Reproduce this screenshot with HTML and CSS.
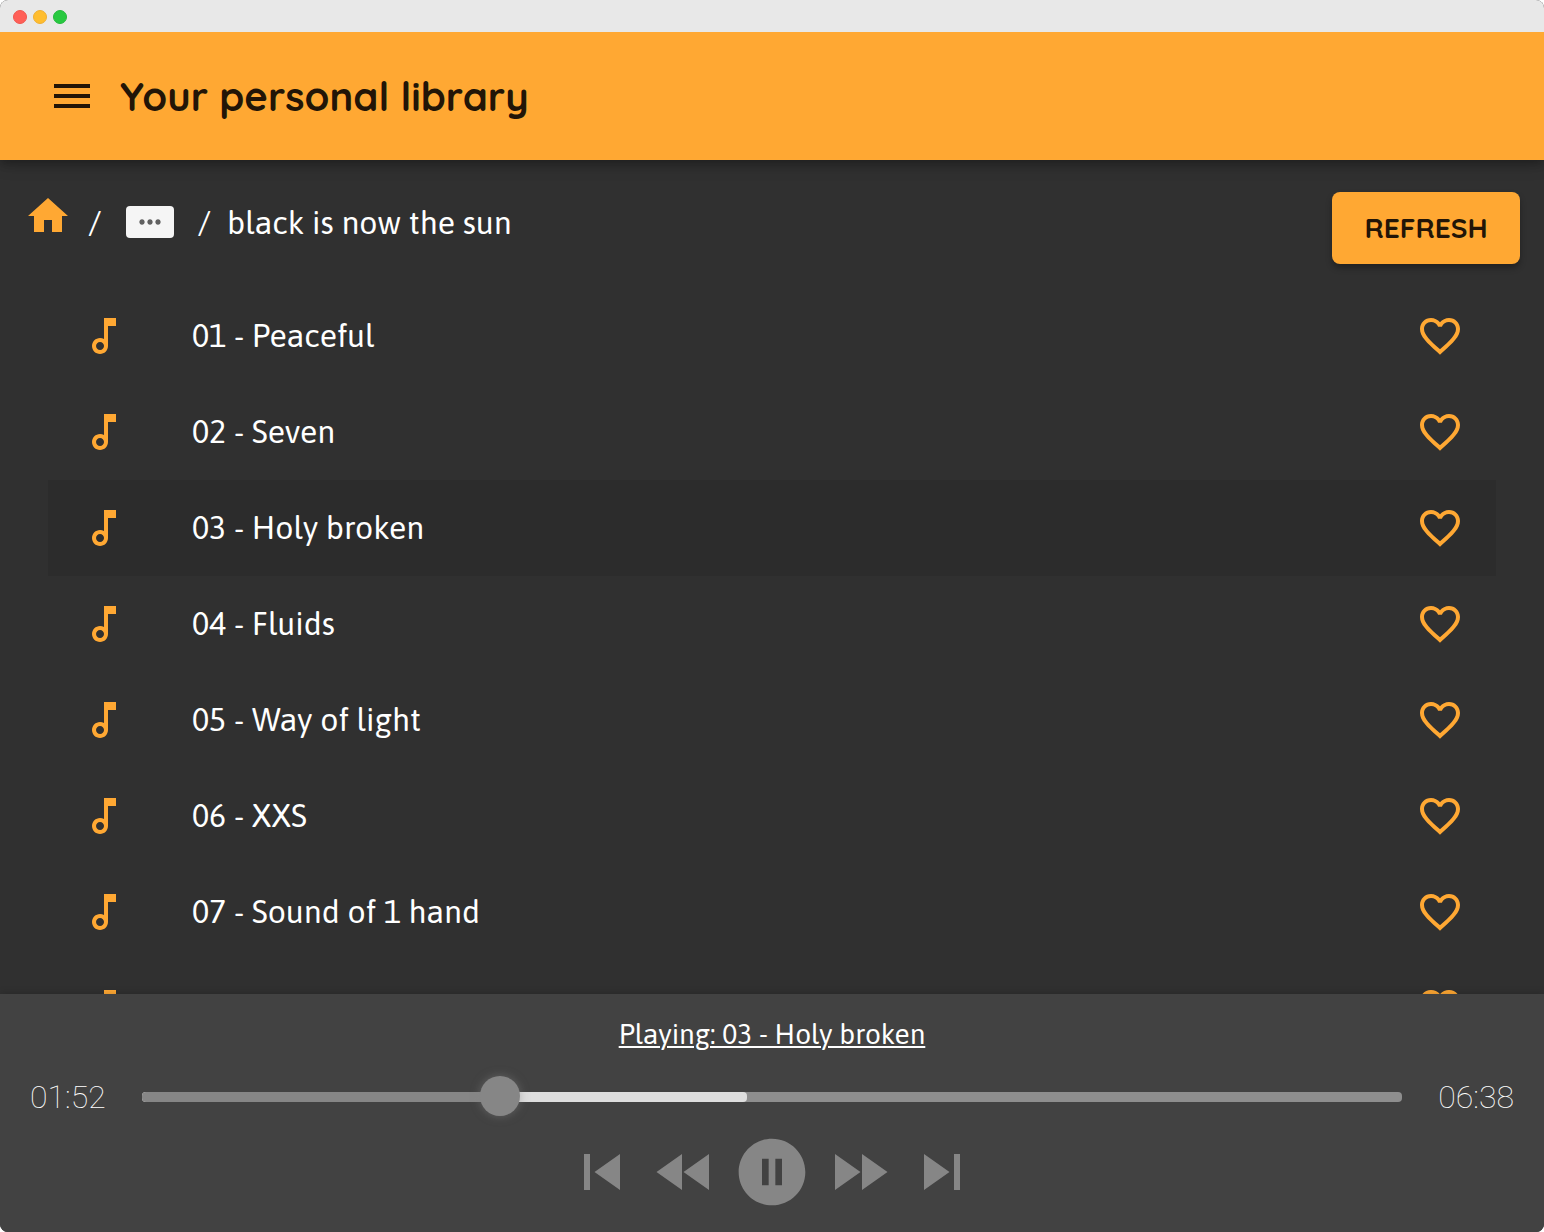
FILE: index.html
```html
<!DOCTYPE html>
<html lang="en">
<head>
<meta charset="utf-8">
<meta name="viewport" content="width=device-width, initial-scale=1">
<title>Your personal library</title>
<link rel="stylesheet" href="styles.css">
</head>
<body>
<svg class="sprite" aria-hidden="true">
  <symbol id="note" viewBox="0 0 24 24"><path d="M12 3l.01 10.55c-.59-.34-1.27-.55-2-.55C7.79 13 6 14.79 6 17s1.79 4 4.01 4S14 19.21 14 17V7h4V3h-6zm-1.99 16c-1.1 0-2-.9-2-2s.9-2 2-2 2 .9 2 2-.9 2-2 2z"/></symbol>
  <symbol id="heart" viewBox="0 0 24 24"><path d="M16.5 3c-1.74 0-3.41.81-4.5 2.09C10.91 3.81 9.24 3 7.5 3 4.42 3 2 5.42 2 8.5c0 3.78 3.4 6.86 8.55 11.54L12 21.35l1.45-1.32C18.6 15.36 22 12.28 22 8.5 22 5.42 19.58 3 16.5 3zm-4.4 15.55l-.1.1-.1-.1C7.14 14.24 4 11.39 4 8.5 4 6.5 5.5 5 7.5 5c1.54 0 3.04.99 3.57 2.36h1.87C13.46 5.99 14.96 5 16.5 5c2 0 3.5 1.5 3.5 3.5 0 2.89-3.14 5.74-7.9 10.05z"/></symbol>
</svg>
<div class="window">
  <div class="titlebar">
    <span class="dot dot-close"></span>
    <span class="dot dot-minimize"></span>
    <span class="dot dot-zoom"></span>
  </div>

  <header class="appbar">
    <button class="icon-button" type="button" aria-label="Menu">
      <svg class="icon" viewBox="0 0 24 24"><path d="M3 18h18v-2H3v2zm0-5h18v-2H3v2zm0-7v2h18V6H3z"/></svg>
    </button>
    <h1 class="appbar-title">Your personal library</h1>
  </header>

  <main class="library">
    <div class="toolbar">
      <nav class="breadcrumbs" aria-label="Breadcrumb">
        <a class="home" href="#" aria-label="Home">
          <svg class="icon" viewBox="0 0 24 24"><path d="M10 20v-6h4v6h5v-8h3L12 3 2 12h3v8z"/></svg>
        </a>
        <span class="separator">/</span>
        <button class="more" type="button" aria-label="Show path">
          <svg class="more-icon" viewBox="0 0 24 24"><path d="M6 10c-1.100 0-2 .9-2 2s.9 2 2 2 2-.9 2-2-.9-2-2-2zm12 0c-1.100 0-2 .9-2 2s.9 2 2 2 2-.9 2-2-.9-2-2-2zm-6 0c-1.100 0-2 .9-2 2s.9 2 2 2 2-.9 2-2-.9-2-2-2z"/></svg>
        </button>
        <span class="separator">/</span>
        <span class="current">black is now the sun</span>
      </nav>
      <button class="refresh" type="button">REFRESH</button>
    </div>

    <ul class="tracks">
      <li class="track"><svg class="icon"><use href="#note"/></svg><span class="track-name">01 - Peaceful</span><button class="icon-button" type="button" aria-label="Favorite"><svg class="icon"><use href="#heart"/></svg></button></li>
      <li class="track"><svg class="icon"><use href="#note"/></svg><span class="track-name">02 - Seven</span><button class="icon-button" type="button" aria-label="Favorite"><svg class="icon"><use href="#heart"/></svg></button></li>
      <li class="track track-active"><svg class="icon"><use href="#note"/></svg><span class="track-name">03 - Holy broken</span><button class="icon-button" type="button" aria-label="Favorite"><svg class="icon"><use href="#heart"/></svg></button></li>
      <li class="track"><svg class="icon"><use href="#note"/></svg><span class="track-name">04 - Fluids</span><button class="icon-button" type="button" aria-label="Favorite"><svg class="icon"><use href="#heart"/></svg></button></li>
      <li class="track"><svg class="icon"><use href="#note"/></svg><span class="track-name">05 - Way of light</span><button class="icon-button" type="button" aria-label="Favorite"><svg class="icon"><use href="#heart"/></svg></button></li>
      <li class="track"><svg class="icon"><use href="#note"/></svg><span class="track-name">06 - XXS</span><button class="icon-button" type="button" aria-label="Favorite"><svg class="icon"><use href="#heart"/></svg></button></li>
      <li class="track"><svg class="icon"><use href="#note"/></svg><span class="track-name">07 - Sound of 1 hand</span><button class="icon-button" type="button" aria-label="Favorite"><svg class="icon"><use href="#heart"/></svg></button></li>
      <li class="track"><svg class="icon"><use href="#note"/></svg><span class="track-name"></span><button class="icon-button" type="button" aria-label="Favorite"><svg class="icon"><use href="#heart"/></svg></button></li>
    </ul>
  </main>

  <footer class="player">
    <a class="playing" href="#">Playing: 03 - Holy broken</a>
    <div class="timeline">
      <span class="time">01:52</span>
      <div class="seek">
        <span class="seek-buffered" style="width: 48%"></span>
        <span class="seek-played" style="width: 28.400%"></span>
        <input class="seek-input" type="range" min="0" max="398" value="113" aria-label="Position">
      </div>
      <span class="time">06:38</span>
    </div>
    <div class="controls">
      <button class="icon-button" type="button" aria-label="Previous"><svg class="control-icon" viewBox="0 0 24 24"><path d="M6 6h2v12H6zm3.500 6l8.500 6V6z"/></svg></button>
      <button class="icon-button" type="button" aria-label="Rewind"><svg class="control-icon" viewBox="0 0 24 24"><path d="M11 18V6l-8.500 6 8.500 6zm.500-6l8.500 6V6l-8.500 6z"/></svg></button>
      <button class="icon-button" type="button" aria-label="Pause"><svg class="pause-icon" viewBox="0 0 24 24"><path d="M12 2C6.480 2 2 6.480 2 12s4.480 10 10 10 10-4.480 10-10S17.520 2 12 2zm-1 14H9V8h2v8zm4 0h-2V8h2v8z"/></svg></button>
      <button class="icon-button" type="button" aria-label="Fast forward"><svg class="control-icon" viewBox="0 0 24 24"><path d="M4 18l8.500-6L4 6v12zm9-12v12l8.500-6L13 6z"/></svg></button>
      <button class="icon-button" type="button" aria-label="Next"><svg class="control-icon" viewBox="0 0 24 24"><path d="M6 18l8.500-6L6 6v12zM16 6v12h2V6h-2z"/></svg></button>
    </div>
  </footer>
</div>
</body>
</html>
```
FILE: styles.css
```css
* {
  box-sizing: border-box;
}

body {
  margin: 0;
  background: #fff;
  color: #fff;
  font-family: Asap, Lato, "Open Sans", sans-serif;
  font-size: 32px;
  line-height: 48px;
}

button {
  border: 0;
  padding: 0;
  color: inherit;
  font: inherit;
  cursor: pointer;
}

svg {
  display: block;
  fill: currentColor;
}

.sprite {
  display: none;
}

.window {
  display: flex;
  flex-direction: column;
  height: 100vh;
  overflow: hidden;
  border-radius: 8px;
  background: #303030;
}

.titlebar {
  display: flex;
  align-items: center;
  gap: 6px;
  flex: none;
  z-index: 2;
  height: 32px;
  padding: 2px 13px 0;
  background: #e8e8e8;
}

.dot {
  width: 14px;
  height: 14px;
  border: 1px solid;
  border-radius: 50%;
}

.dot-close {
  background: #ff5f57;
  border-color: #f0564e;
}

.dot-minimize {
  background: #ffbd2e;
  border-color: #efaf31;
}

.dot-zoom {
  background: #28c940;
  border-color: #24b93b;
}

.appbar {
  display: flex;
  align-items: center;
  gap: 24px;
  flex: none;
  z-index: 1;
  height: 128px;
  padding: 0 48px;
  background: #ffa833;
  color: #221507;
  box-shadow: 0 4px 8px rgba(0, 0, 0, 0.2), 0 4px 16px rgba(0, 0, 0, 0.2);
}

.appbar-title {
  margin: 0;
  font-family: Quicksand, Inter, sans-serif;
  font-size: 40px;
  font-weight: 700;
}

.icon-button {
  flex: none;
  background: none;
}

.icon {
  flex: none;
  width: 48px;
  height: 48px;
}

.library {
  flex: 1;
  min-height: 0;
  overflow: hidden;
}

.toolbar {
  display: flex;
  align-items: flex-start;
  justify-content: space-between;
  padding: 32px 24px 24px;
}

.breadcrumbs {
  display: flex;
  gap: 16px;
}

.home {
  color: #ffa833;
}

.separator,
.current {
  padding-top: 7px;
}

.more {
  display: grid;
  place-items: center;
  width: 48px;
  height: 32px;
  margin: 14px 8px 0;
  border-radius: 4px;
  background: #f5f5f5;
  color: #616161;
}

.more-icon {
  width: 32px;
  height: 32px;
}

.refresh {
  min-width: 188px;
  height: 72px;
  padding: 0 32px;
  border-radius: 8px;
  background: #ffa833;
  color: #221507;
  font-family: Quicksand, Lato, sans-serif;
  font-size: 28px;
  font-weight: 700;
  box-shadow: 0 4px 6px rgba(0, 0, 0, 0.3);
}

.tracks {
  margin: 0;
  padding: 0 48px;
  list-style: none;
}

.track {
  display: flex;
  align-items: center;
  gap: 64px;
  height: 96px;
  padding: 0 32px;
}

.track .icon {
  color: #ffa833;
}

.track-active {
  background: #2c2c2c;
}

.track-name {
  flex: 1;
}

.player {
  display: flex;
  flex-direction: column;
  align-items: center;
  flex: none;
  z-index: 1;
  padding: 20px 30px;
  background: #424242;
  box-shadow: 0 0 8px rgba(0, 0, 0, 0.2);
}

.playing {
  color: #fff;
  font-size: 28px;
  line-height: 40px;
  margin-bottom: 24px;
  text-underline-offset: 2px;
  text-decoration-thickness: 2px;
}

.timeline {
  display: flex;
  align-items: center;
  gap: 36px;
  align-self: stretch;
}

.time {
  font-family: Roboto, sans-serif;
  font-weight: 100;
  line-height: 38px;
}

.seek {
  display: grid;
  position: relative;
  flex: 1;
  height: 10px;
  border-radius: 4px;
  background: #8e8e8e;
}

.seek-buffered,
.seek-played {
  grid-area: 1 / 1;
  border-radius: 4px;
}

.seek-buffered {
  background: #dedede;
}

.seek-played {
  background: #868686;
}

.seek-input {
  position: absolute;
  top: -16px;
  left: -20px;
  width: calc(100% + 40px);
  height: 40px;
  margin: 0;
  background: none;
  appearance: none;
}

.seek-input::-webkit-slider-thumb {
  width: 40px;
  height: 40px;
  border-radius: 50%;
  background: #868686;
  box-shadow: 0 0 10px rgba(134, 134, 134, 0.5);
  appearance: none;
}

.controls {
  display: flex;
  align-items: center;
  gap: 11px;
  margin-top: 16px;
  color: #868686;
}

.control-icon {
  width: 72px;
  height: 72px;
}

.pause-icon {
  width: 80px;
  height: 80px;
}
```
